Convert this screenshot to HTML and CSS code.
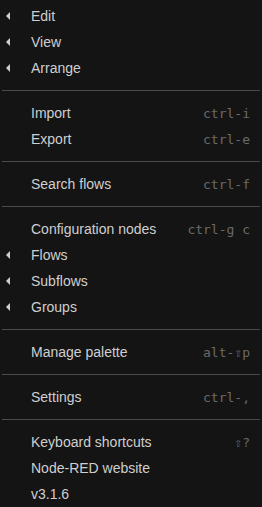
FILE: index.html
```html
<!DOCTYPE html>
<html>
<head>
<meta charset="utf-8">
<link rel="stylesheet" href="styles.css">
</head>
<body>
<ul class="menu">
  <li class="item"><span class="caret"></span><span class="label">Edit</span></li>
  <li class="item"><span class="caret"></span><span class="label">View</span></li>
  <li class="item"><span class="caret"></span><span class="label">Arrange</span></li>
  <li class="divider"></li>
  <li class="item"><span class="label">Import</span><span class="key">ctrl-i</span></li>
  <li class="item"><span class="label">Export</span><span class="key">ctrl-e</span></li>
  <li class="divider"></li>
  <li class="item"><span class="label">Search flows</span><span class="key">ctrl-f</span></li>
  <li class="divider"></li>
  <li class="item"><span class="label">Configuration nodes</span><span class="key">ctrl-g c</span></li>
  <li class="item"><span class="caret"></span><span class="label">Flows</span></li>
  <li class="item"><span class="caret"></span><span class="label">Subflows</span></li>
  <li class="item"><span class="caret"></span><span class="label">Groups</span></li>
  <li class="divider"></li>
  <li class="item"><span class="label">Manage palette</span><span class="key">alt-⇧p</span></li>
  <li class="divider"></li>
  <li class="item"><span class="label">Settings</span><span class="key">ctrl-,</span></li>
  <li class="divider"></li>
  <li class="item"><span class="label">Keyboard shortcuts</span><span class="key">⇧?</span></li>
  <li class="item"><span class="label">Node-RED website</span></li>
  <li class="item"><span class="label">v3.1.6</span></li>
</ul>
</body>
</html>
```
FILE: styles.css
```css
html, body {
  margin: 0;
  padding: 0;
  background: #141414;
}
.menu {
  list-style: none;
  margin: 0;
  padding: 3px 2px 0 2px;
  font-family: "Liberation Sans", Arial, sans-serif;
  font-size: 14px;
  color: #cfcfcf;
}
.item {
  position: relative;
  display: flex;
  align-items: center;
  height: 26px;
  padding: 0 10px 0 29px;
}
.label {
  flex: 1;
  white-space: nowrap;
}
.key {
  font-family: "DejaVu Sans Mono", monospace;
  font-size: 13px;
  color: #6a6a6a;
  white-space: nowrap;
}
.caret {
  position: absolute;
  left: 4px;
  top: 9px;
  width: 0;
  height: 0;
  border-top: 4px solid transparent;
  border-bottom: 4px solid transparent;
  border-right: 4px solid #cfcfcf;
}
.divider {
  height: 1px;
  margin: 9px 0;
  background: #4a4a4a;
}
```
